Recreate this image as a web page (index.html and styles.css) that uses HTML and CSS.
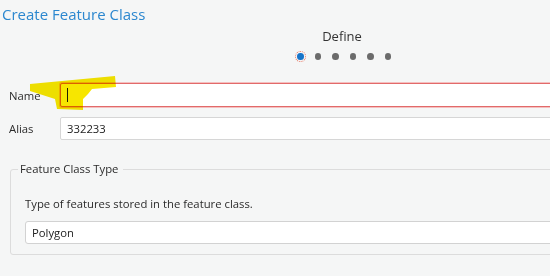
FILE: index.html
```html
<!DOCTYPE html>
<html lang="en">
<head>
<meta charset="UTF-8">
<title>Create Feature Class</title>
<link rel="stylesheet" href="styles.css">
</head>
<body>
<div class="pane">
    <h1 class="pane-title">Create Feature Class</h1>
    <div class="stepper">
        <div class="step-name">Define</div>
        <div class="step-dots">
            <span class="dot current"></span>
            <span class="dot"></span>
            <span class="dot"></span>
            <span class="dot"></span>
            <span class="dot"></span>
            <span class="dot"></span>
        </div>
    </div>
    <div class="form-row name-row">
        <label class="field-label">Name</label>
        <div class="text-box invalid"><span class="caret"></span></div>
        <svg class="marker" width="92" height="38" viewBox="0 0 92 38">
            <path d="M1 8 L86 0 L87 11 L63 13 L59 18 L54 23 L54 34 L28 33 L26 23 L1 15 Z" fill="#f7e600"/>
        </svg>
    </div>
    <div class="form-row">
        <label class="field-label">Alias</label>
        <div class="text-box">332233</div>
    </div>
    <fieldset class="group">
        <legend class="group-title">Feature Class Type</legend>
        <p class="group-help">Type of features stored in the feature class.</p>
        <div class="text-box combo">Polygon</div>
    </fieldset>
</div>
</body>
</html>
```

FILE: styles.css
```css
html, body {
    margin: 0;
    padding: 0;
    overflow: hidden;
}
body {
    font-family: 'Open Sans', sans-serif;
    font-size: 11.3px;
    color: #2b2b2b;
    background-color: #f5f6f6;
}
.pane {
    width: 600px;
    height: 276px;
}
.pane-title {
    margin: 0;
    padding: 4px 0 0 2px;
    font-size: 15px;
    font-weight: 400;
    line-height: 20px;
    color: #2b87cf;
}
.stepper {
    width: 100px;
    margin: 3px 0 0 291px;
    text-align: center;
}
.step-name {
    font-size: 13px;
    line-height: 18px;
    color: #333;
    padding-left: 2px;
}
.step-dots {
    display: flex;
    align-items: center;
    gap: 11px;
    height: 14px;
    margin-top: 4px;
    padding-left: 6px;
}
.dot {
    width: 7px;
    height: 7px;
    border-radius: 50%;
    background-color: #6b6b6b;
}
.dot.current {
    background-color: #1875c9;
    outline: 1px dotted #e8735f;
    outline-offset: 1px;
}
.form-row {
    position: relative;
    display: flex;
    align-items: center;
    padding-left: 9px;
}
.name-row {
    margin-top: 20px;
}
.form-row + .form-row {
    margin-top: 10px;
}
.field-label {
    width: 51px;
}
.text-box {
    flex: 1;
    height: 21px;
    line-height: 21px;
    padding: 0 6px;
    background-color: #fff;
    border: 1px solid #d6d6d6;
    border-radius: 2px;
    color: #222;
}
.text-box.invalid {
    height: 22px;
    border: 1px solid #e26a6a;
    box-shadow: 0 0 0 1px #f4c0c0;
}
.caret {
    display: inline-block;
    width: 1px;
    height: 14px;
    margin-top: 4px;
    background-color: #222;
}
.marker {
    position: absolute;
    left: 29px;
    top: -7px;
    mix-blend-mode: multiply;
}
.group {
    margin: 21px 0 0 10px;
    padding: 0 0 13px 14px;
    border: 1px solid #dcdcdc;
    border-radius: 3px;
    height: 79px;
}
.group-title {
    padding: 0 5px 0 2px;
    margin-left: -7px;
    line-height: 16px;
    color: #2b2b2b;
}
.group-help {
    margin: 19px 0 9px 0;
    line-height: 16px;
}
.combo {
    height: 21px;
    line-height: 21px;
    border-color: #d2d2d2;
    border-radius: 3px;
}
```
